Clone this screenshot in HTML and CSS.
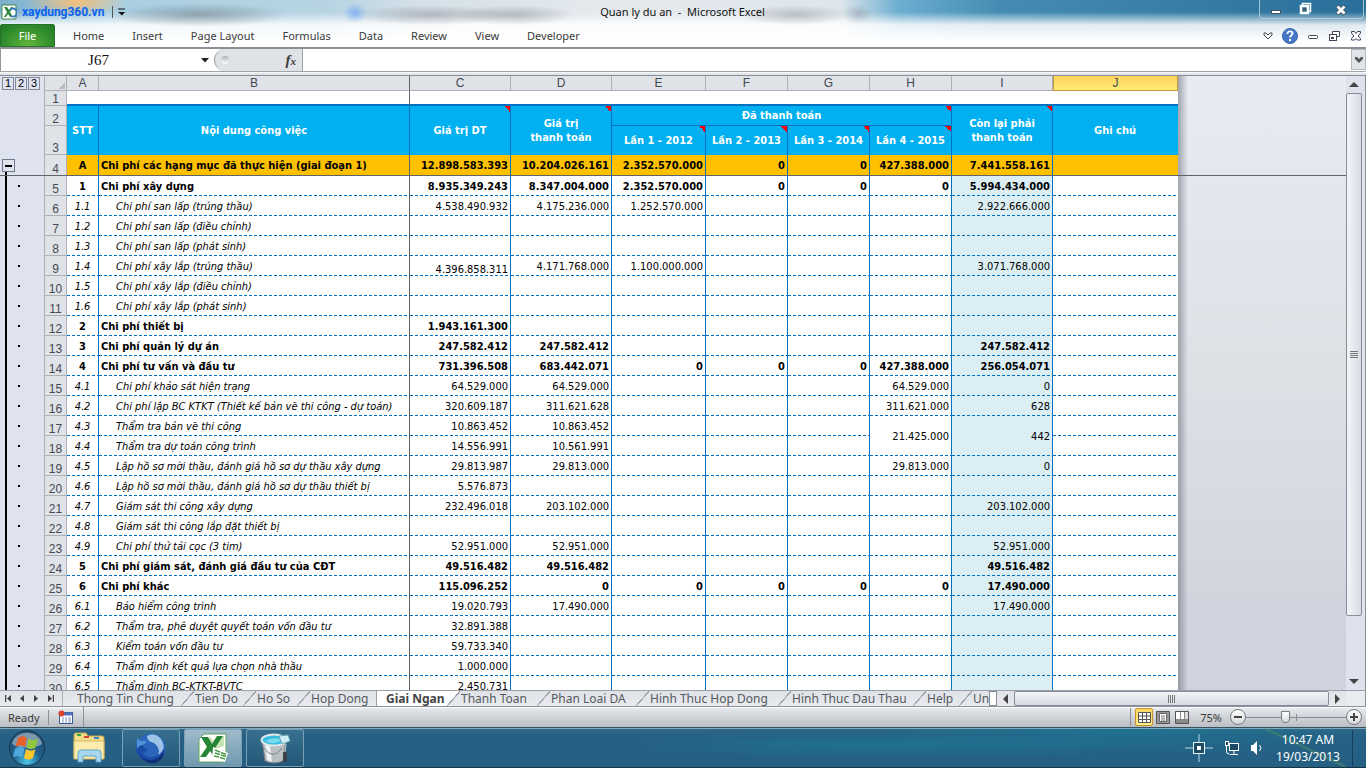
FILE: index.html
```
<!DOCTYPE html>
<html lang="vi">
<head>
<meta charset="utf-8">
<title>Quan ly du an - Microsoft Excel</title>
<link rel="stylesheet" href="styles.css">
</head>
<body>
<header class="top">
  <div class="titlebar">
    <div class="quick">
      <svg class="app-icon" width="16" height="16" viewBox="0 0 16 16"><path d="M1 1h14v14H1z" fill="#fff" stroke="#3a8a45"/><path d="M3 3h3l2 3 2-3h2L9 8l3 5H9L7 10l-2 3H3l3-5z" fill="#2f8a3a"/><path d="M9 6a4 4 0 1 1 1 6" fill="none" stroke="#3f7fc0" stroke-width="2"/></svg>
      <span class="brand">xaydung360.vn</span>
      <span class="quick-sep"></span>
      <button class="bare" aria-label="Customize quick access"><svg width="7" height="8"><path d="M0 1h7" stroke="#111"/><path d="M0 4h7l-3 3.5z" fill="#111"/></svg></button>
    </div>
    <h1 class="title">Quan ly du an &nbsp;- &nbsp;Microsoft Excel</h1>
    <div class="window-buttons">
      <button class="bare" aria-label="Minimize"><svg width="12" height="14"><rect x="1.500" y="8.500" width="9" height="3" fill="#fff" stroke="#445460"/></svg></button>
      <button class="bare" aria-label="Restore"><svg width="13" height="14"><path d="M3.500 3V1.500h8v8H10" fill="none" stroke="#fff" stroke-width="1.500"/><rect x="2" y="4" width="7" height="7" fill="none" stroke="#fff" stroke-width="2.500"/><rect x="4" y="6" width="3" height="3" fill="#456"/></svg></button>
      <button class="bare" aria-label="Close"><svg width="12" height="14"><path d="M2 4l8 8M10 4l-8 8" stroke="#445460" stroke-width="4.500"/><path d="M2.500 4.500l7 7M9.500 4.500l-7 7" stroke="#fff" stroke-width="2.800"/></svg></button>
    </div>
  </div>
  <nav class="ribbon">
    <button class="file">File</button>
    <button class="tab">Home</button>
    <button class="tab">Insert</button>
    <button class="tab">Page Layout</button>
    <button class="tab">Formulas</button>
    <button class="tab">Data</button>
    <button class="tab">Review</button>
    <button class="tab">View</button>
    <button class="tab">Developer</button>
    <div class="ribbon-tools">
      <button class="bare" aria-label="Expand ribbon"><svg width="10" height="8"><path d="M1 3V1h2l2 2 2-2h2v2L5 7z" fill="#fff" stroke="#445" /></svg></button>
      <button class="bare" aria-label="Help"><svg width="16" height="16"><circle cx="8" cy="8" r="7.500" fill="#4677c4" stroke="#3561a9"/><path d="M5.500 6c0-4 5-3 5-.5C10.500 7.500 8 7.500 8 9.500" fill="none" stroke="#fff" stroke-width="1.800"/><circle cx="8" cy="12" r="1.200" fill="#fff"/></svg></button>
      <button class="bare" aria-label="Minimize workbook"><svg width="12" height="12"><rect x="1.500" y="5.500" width="9" height="3" rx="1" fill="#fff" stroke="#445"/></svg></button>
      <button class="bare" aria-label="Restore workbook"><svg width="13" height="12"><path d="M4.500 4V1.500h7v5H9" fill="#fff" stroke="#445"/><rect x="1.500" y="4.500" width="7" height="6" fill="#fff" stroke="#445"/><rect x="3.500" y="7.500" width="2" height="1" fill="#fff" stroke="#445"/></svg></button>
      <button class="bare glow" aria-label="Close workbook"><svg width="12" height="12"><path d="M1.500 1.500h3L6 3.500l1.500-2h3v1.500L8 6l2.500 2.500V10h-3L6 8.500 4.500 10h-3V8.500L4 6 1.500 3z" fill="#fff" stroke="#445"/></svg></button>
    </div>
  </nav>
</header>

<div class="formula-bar">
  <input class="name-box" aria-label="Name box" value="J67">
  <button class="bare name-arrow" aria-label="Name list"><svg width="8" height="5"><path d="M0 0h8L4 4.500z" fill="#222"/></svg></button>
  <div class="fx-area"><span class="knob"></span><button class="bare fx" aria-label="Insert function">f<small>x</small></button></div>
  <input class="formula" aria-label="Formula">
  <button class="formula-expand" aria-label="Expand formula bar"><svg width="8" height="6"><path d="M0 0h2l2 2 2-2h2v2L4 6 0 2z" fill="#555"/></svg></button>
</div>

<main class="work">
  <div class="sheet">
    <table class="grid">
      <colgroup><col class="w-out"><col class="w-row"><col class="w-a"><col class="w-b"><col class="w-cd"><col class="w-cd"><col class="w-e"><col class="w-f"><col class="w-f"><col class="w-f"><col class="w-cd"><col class="w-j"></colgroup>
      <tr class="letters"><td class="levels"><div><button>1</button><button>2</button><button>3</button></div></td><th class="corner"></th><th>A</th><th class="frz">B</th><th>C</th><th>D</th><th>E</th><th>F</th><th>G</th><th>H</th><th>I</th><th class="active">J</th></tr>
      <tr class="r1"><td class="out"></td><th>1</th><td class="plain"></td><td class="plain frz"></td><td class="plain" colspan="8"></td></tr>
      <tr class="head r2"><td class="out"></td><th>2</th><td rowspan="2">STT</td><td rowspan="2">Nội dung công việc</td><td class="note" rowspan="2">Giá trị DT</td><td class="note" rowspan="2">Giá trị<br>thanh toán</td><td class="note sub" colspan="4">Đã thanh toán</td><td class="note" rowspan="2">Còn lại phải<br>thanh toán</td><td class="last" rowspan="2">Ghi chú</td></tr>
      <tr class="head r3"><td class="out"></td><th>3</th><td class="note">Lần 1 - 2012</td><td class="note">Lần 2 - 2013</td><td class="note">Lần 3 - 2014</td><td class="note">Lần 4 - 2015</td></tr>
      <tr class="gold bold"><td class="out"><button class="collapse" aria-label="Collapse group"></button></td><th>4</th><td>A</td><td>Chi phí các hạng mục đã thực hiện (giai đoạn 1)</td><td>12.898.583.393</td><td>10.204.026.161</td><td>2.352.570.000</td><td>0</td><td>0</td><td>427.388.000</td><td>7.441.558.161</td><td></td></tr>
      <tr class="row bold"><td class="out"></td><th>5</th><td>1</td><td>Chi phí xây dựng</td><td>8.935.349.243</td><td>8.347.004.000</td><td>2.352.570.000</td><td>0</td><td>0</td><td>0</td><td>5.994.434.000</td><td></td></tr>
      <tr class="row"><td class="out"></td><th>6</th><td>1.1</td><td>Chi phí san lấp (trúng thầu)</td><td>4.538.490.932</td><td>4.175.236.000</td><td>1.252.570.000</td><td></td><td></td><td></td><td>2.922.666.000</td><td></td></tr>
      <tr class="row"><td class="out"></td><th>7</th><td>1.2</td><td>Chi phí san lấp (điều chỉnh)</td><td></td><td></td><td></td><td></td><td></td><td></td><td></td><td></td></tr>
      <tr class="row"><td class="out"></td><th>8</th><td>1.3</td><td>Chi phí san lấp (phát sinh)</td><td></td><td></td><td></td><td></td><td></td><td></td><td></td><td></td></tr>
      <tr class="row"><td class="out"></td><th>9</th><td>1.4</td><td>Chi phí xây lắp (trúng thầu)</td><td class="low">4.396.858.311</td><td>4.171.768.000</td><td>1.100.000.000</td><td></td><td></td><td></td><td>3.071.768.000</td><td></td></tr>
      <tr class="row"><td class="out"></td><th>10</th><td>1.5</td><td>Chi phí xây lắp (điều chỉnh)</td><td></td><td></td><td></td><td></td><td></td><td></td><td></td><td></td></tr>
      <tr class="row"><td class="out"></td><th>11</th><td>1.6</td><td>Chi phí xây lắp (phát sinh)</td><td></td><td></td><td></td><td></td><td></td><td></td><td></td><td></td></tr>
      <tr class="row bold"><td class="out"></td><th>12</th><td>2</td><td>Chi phí thiết bị</td><td>1.943.161.300</td><td></td><td></td><td></td><td></td><td></td><td></td><td></td></tr>
      <tr class="row bold"><td class="out"></td><th>13</th><td>3</td><td>Chi phí quản lý dự án</td><td>247.582.412</td><td>247.582.412</td><td></td><td></td><td></td><td></td><td>247.582.412</td><td></td></tr>
      <tr class="row bold"><td class="out"></td><th>14</th><td>4</td><td>Chi phí tư vấn và đầu tư</td><td>731.396.508</td><td>683.442.071</td><td>0</td><td>0</td><td>0</td><td>427.388.000</td><td>256.054.071</td><td></td></tr>
      <tr class="row"><td class="out"></td><th>15</th><td>4.1</td><td>Chi phí khảo sát hiện trạng</td><td>64.529.000</td><td>64.529.000</td><td></td><td></td><td></td><td>64.529.000</td><td>0</td><td></td></tr>
      <tr class="row"><td class="out"></td><th>16</th><td>4.2</td><td>Chi phí lập BC KTKT (Thiết kế bản vẽ thi công - dự toán)</td><td>320.609.187</td><td>311.621.628</td><td></td><td></td><td></td><td>311.621.000</td><td>628</td><td></td></tr>
      <tr class="row"><td class="out"></td><th>17</th><td>4.3</td><td>Thẩm tra bản vẽ thi công</td><td>10.863.452</td><td>10.863.452</td><td></td><td></td><td></td><td rowspan="2">21.425.000</td><td class="due" rowspan="2">442</td><td></td></tr>
      <tr class="row merged"><td class="out"></td><th>18</th><td>4.4</td><td>Thẩm tra dự toán công trình</td><td>14.556.991</td><td>10.561.991</td><td></td><td></td><td></td><td></td></tr>
      <tr class="row"><td class="out"></td><th>19</th><td>4.5</td><td>Lập hồ sơ mời thầu, đánh giá hồ sơ dự thầu xây dựng</td><td>29.813.987</td><td>29.813.000</td><td></td><td></td><td></td><td>29.813.000</td><td>0</td><td></td></tr>
      <tr class="row"><td class="out"></td><th>20</th><td>4.6</td><td>Lập hồ sơ mời thầu, đánh giá hồ sơ dự thầu thiết bị</td><td>5.576.873</td><td></td><td></td><td></td><td></td><td></td><td></td><td></td></tr>
      <tr class="row"><td class="out"></td><th>21</th><td>4.7</td><td>Giám sát thi công xây dựng</td><td>232.496.018</td><td>203.102.000</td><td></td><td></td><td></td><td></td><td>203.102.000</td><td></td></tr>
      <tr class="row"><td class="out"></td><th>22</th><td>4.8</td><td>Giám sát thi công lắp đặt thiết bị</td><td></td><td></td><td></td><td></td><td></td><td></td><td></td><td></td></tr>
      <tr class="row"><td class="out"></td><th>23</th><td>4.9</td><td>Chi phí thử tải cọc (3 tim)</td><td>52.951.000</td><td>52.951.000</td><td></td><td></td><td></td><td></td><td>52.951.000</td><td></td></tr>
      <tr class="row bold"><td class="out"></td><th>24</th><td>5</td><td>Chi phí giám sát, đánh giá đầu tư của CĐT</td><td>49.516.482</td><td>49.516.482</td><td></td><td></td><td></td><td></td><td>49.516.482</td><td></td></tr>
      <tr class="row bold"><td class="out"></td><th>25</th><td>6</td><td>Chi phí khác</td><td>115.096.252</td><td>0</td><td>0</td><td>0</td><td>0</td><td>0</td><td>17.490.000</td><td></td></tr>
      <tr class="row"><td class="out"></td><th>26</th><td>6.1</td><td>Bảo hiểm công trình</td><td>19.020.793</td><td>17.490.000</td><td></td><td></td><td></td><td></td><td>17.490.000</td><td></td></tr>
      <tr class="row"><td class="out"></td><th>27</th><td>6.2</td><td>Thẩm tra, phê duyệt quyết toán vốn đầu tư</td><td>32.891.388</td><td></td><td></td><td></td><td></td><td></td><td></td><td></td></tr>
      <tr class="row"><td class="out"></td><th>28</th><td>6.3</td><td>Kiểm toán vốn đầu tư</td><td>59.733.340</td><td></td><td></td><td></td><td></td><td></td><td></td><td></td></tr>
      <tr class="row"><td class="out"></td><th>29</th><td>6.4</td><td>Thẩm định kết quả lựa chọn nhà thầu</td><td>1.000.000</td><td></td><td></td><td></td><td></td><td></td><td></td><td></td></tr>
      <tr class="row"><td class="out"></td><th>30</th><td>6.5</td><td>Thẩm định BC-KTKT-BVTC</td><td>2.450.731</td><td></td><td></td><td></td><td></td><td></td><td></td><td></td></tr>
    </table>
    <div class="void"></div>
    <div class="freeze-line"></div>
  </div>
  <div class="vscroll">
    <button class="bare v-btn" aria-label="Scroll up"><svg width="10" height="5"><path d="M0 5h10L5 0z" fill="#444"/></svg></button>
    <div class="v-thumb"><i class="grip"></i></div>
    <div class="v-rest"></div>
    <button class="bare v-btn" aria-label="Scroll down"><svg width="10" height="5"><path d="M0 0h10L5 5z" fill="#444"/></svg></button>
  </div>
</main>

<div class="sheet-bar">
  <div class="sheet-nav">
    <button class="bare" aria-label="First sheet"><svg width="7" height="7"><path d="M.5 0v7" stroke="#444" stroke-width="1.500"/><path d="M6 0v7L2 3.500z" fill="#444"/></svg></button>
    <button class="bare" aria-label="Previous sheet"><svg width="7" height="7"><path d="M5 0v7L1 3.500z" fill="#444"/></svg></button>
    <button class="bare" aria-label="Next sheet"><svg width="7" height="7"><path d="M1 0v7l4-3.500z" fill="#444"/></svg></button>
    <button class="bare" aria-label="Last sheet"><svg width="7" height="7"><path d="M6.500 0v7" stroke="#444" stroke-width="1.500"/><path d="M1 0v7l4-3.500z" fill="#444"/></svg></button>
  </div>
  <div class="sheet-tabs">
    <button class="stab s-118">Thong Tin Chung</button><button class="stab s-62">Tien Do</button><button class="stab s-54">Ho So</button><button class="stab s-75 before">Hop Dong</button><button class="stab s-75 current">Giai Ngan</button><button class="stab s-90">Thanh Toan</button><button class="stab s-99">Phan Loai DA</button><button class="stab s-142">Hinh Thuc Hop Dong</button><button class="stab s-135">Hinh Thuc Dau Thau</button><button class="stab s-46">Help</button><button class="stab end">Un</button>
  </div>
  <span class="splitter"></span>
  <button class="bare h-btn" aria-label="Scroll left"><svg width="5" height="10"><path d="M5 0v10L0 5z" fill="#444"/></svg></button>
  <div class="h-thumb"><i class="grip side"></i></div>
  <button class="bare h-btn" aria-label="Scroll right"><svg width="5" height="10"><path d="M0 0v10l5-5z" fill="#444"/></svg></button>
  <span class="bar-corner"></span>
</div>

<div class="status">
  <span class="ready">Ready</span>
  <button class="bare macro" aria-label="Record macro"><svg width="16" height="15"><rect x="1.500" y="2.500" width="13" height="11" fill="#fff" stroke="#3c5c95"/><path d="M2 4h12" stroke="#4a74c0" stroke-width="3"/><path d="M4 8h2m1 0h2m1 0h3M4 10h2m1 0h2m1 0h3M4 12h2m1 0h2m1 0h3" stroke="#7d94bd"/><circle cx="3.500" cy="3.500" r="3" fill="#d9412c"/></svg></button>
  <span class="status-fill"></span>
  <div class="views">
    <button class="view on" aria-label="Normal"><svg width="13" height="11"><path d="M.5.5h12v10H.5zM4.500 0v11M8.500 0v11M0 4h13M0 7.500h13" fill="#fff" stroke="#555"/></svg></button>
    <button class="view" aria-label="Page layout"><svg width="14" height="13"><path d="M.5.500h13v12H.5z" fill="#999" stroke="#555"/><path d="M3.500 2.500h7v8h-7z" fill="#fff" stroke="#666"/><path d="M5 5h4M5 7h4M5 9h4" stroke="#777"/></svg></button>
    <button class="view" aria-label="Page break preview"><svg width="14" height="13"><path d="M.5.500h13v12H.5z" fill="#888" stroke="#555"/><path d="M1 1h4v7H1zM6 1h3v7H6z" fill="#fff"/><path d="M10 1h3v7h-3z" fill="#ddd"/></svg></button>
  </div>
  <span class="percent">75%</span>
  <button class="zoom-btn" aria-label="Zoom out"><svg width="8" height="8"><path d="M0 4h8" stroke="#444" stroke-width="2"/></svg></button>
  <input class="zoom" type="range" min="0" max="100" value="38" aria-label="Zoom">
  <button class="zoom-btn" aria-label="Zoom in"><svg width="8" height="8"><path d="M0 4h8M4 0v8" stroke="#444" stroke-width="2"/></svg></button>
</div>

<footer class="taskbar">
  <button class="bare start" aria-label="Start"><svg width="38" height="38" viewBox="0 0 38 38"><defs><radialGradient id="orb" cx=".5" cy=".9" r=".8"><stop offset="0" stop-color="#4cc8ea"/><stop offset=".5" stop-color="#1f5f8d"/><stop offset="1" stop-color="#26506e"/></radialGradient></defs><circle cx="19" cy="19" r="17.500" fill="url(#orb)" stroke="#15394f"/><path d="M4 15C7 0 31 0 34 15 27 20 11 20 4 15z" fill="#bfd3df" opacity=".55"/><path d="M10 9c4-2.500 6-2 9 0l-2 9c-4-2-6-2-9.500 0z" fill="#e8602c"/><path d="M20.500 9.500c4 2 6 2 9.500 0l-2.500 9c-3.500 2-6 2-9 0z" fill="#93c83e"/><path d="M7 19.500c4-2 6-2 9.500 0l-2.500 9c-3.500-2-6-2-9 0z" fill="#4fa7e0"/><path d="M18 20c3.500 2 6 2 9.500 0l-2.500 9c-3.500 2-6 2-9 0z" fill="#fbc52c"/></svg></button>
  <button class="task flat" aria-label="Explorer"><svg width="34" height="32" viewBox="0 0 34 32"><path d="M2 3q0-2 2-2h10l2 3h14q2 0 2 2v20H2z" fill="#f3dc87" stroke="#c8a24b"/><path d="M5 2h4v2H5z" fill="#2fa644"/><path d="M12 4h5v2h-5z" fill="#d5452e"/><path d="M22 5h5v2h-5z" fill="#3b83cc"/><path d="M2 9h30v18H2z" fill="#fbecae" stroke="#d5b665"/><path d="M6 30V21q0-3 3-3h17q3 0 3 3v9h-5v-6H11v6z" fill="#a9d8ee" stroke="#5fa6c9"/></svg></button>
  <button class="task" aria-label="Firefox"><svg width="32" height="32" viewBox="0 0 32 32"><circle cx="16" cy="16" r="14.500" fill="#2a66bb"/><path d="M12 4q8-4 14 3 4 6 2 12-2 3-5 4 2-4 0-7-2-5-7-6-4-2-4-6z" fill="#9dc4e6"/><path d="M2 6q2 1 3 3 4-1 7 1l-4 3q1 4 5 4-2 4-6 4 4 5 11 4 7-1 11-9 2 9-6 13-8 4-15-1Q0 22 1 14 1 9 2 6z" fill="#1b4da6"/><path d="M2 6q2 1 3 3 4-1 7 1l-4 3q-4 0-6 4-1-6 0-11z" fill="#4d93d8"/><path d="M3 20q5 9 14 8 8-1 12-9 0 9-9 12-11 2-17-11z" fill="#0f2f7a"/></svg></button>
  <button class="task lit" aria-label="Excel"><svg width="32" height="32" viewBox="0 0 32 32"><path d="M7 2h22v24q0 4-4 4H2V7z" fill="#fff" stroke="#60a75d"/><path d="M13 4l3 5 5-5h6v10l-8 3 2 6-5-1-3-5-5 7H4l6-10z" fill="#c8e4b7"/><path d="M4 5h7l4 7 5-8h6l-8 12 6 9h-7l-4-6-4 6H3l7-10z" fill="#268638"/><path d="M16 15l15 6-3 9-13-3z" fill="#fff"/><path d="M18 18l5 2m1 .5l5 2M18 21l5 1.500m1 .5l5 1.500M17 24l5 1m1 .5l5 1.500" stroke="#4d9d4d" stroke-width="1.500"/></svg></button>
  <button class="task" aria-label="Paint bucket"><svg width="32" height="32" viewBox="0 0 32 32"><path d="M3 8l3 21q9 4 18 0l3-21z" fill="#b9bfc2" stroke="#72797d"/><path d="M6 12l2 16 5 2-2-17z" fill="#eef1f2"/><ellipse cx="15" cy="8" rx="12.500" ry="5.500" fill="#37bde0" stroke="#e1e7e9" stroke-width="2"/><path d="M6 9q8-5 18-1-9 6-18 1z" fill="#78dced"/><path d="M20 4l9-1 2 6-8 3z" fill="#cdeef6" stroke="#6fa9bb"/><path d="M5 16q9 13 18 0" fill="none" stroke="#7b8589"/><path d="M27 12l-1 9" stroke="#c9cdd0"/><path d="M24 20h4v10h-4z" fill="#394248"/></svg></button>
  <span class="task-fill"></span>
  <div class="tray">
    <svg width="30" height="30"><path d="M15 1v8M15 21v8M1 15h8M21 15h8" stroke="#b9d6e4"/><rect x="9.500" y="9.500" width="11" height="11" fill="#1e4a66" stroke="#e6f2f7"/><rect x="13" y="13" width="4" height="4" fill="#fff"/></svg>
    <svg width="16" height="16"><rect x="5.500" y="3.500" width="9" height="7" fill="#1b4a67" stroke="#fff"/><path d="M10 11v3M6 14.500h8M2.500 5v7q0 2 3 2" fill="none" stroke="#fff"/><rect x="1.500" y="1.500" width="3" height="4" fill="#1b4a67" stroke="#fff"/></svg>
    <svg width="14" height="16"><path d="M1 5h2l4-4v14l-4-4H1z" fill="#fff"/><path d="M9.500 5q3 3 0 6" fill="none" stroke="#fff"/></svg>
  </div>
  <div class="clock"><span>10:47 AM</span><span>19/03/2013</span></div>
  <button class="bare show-desktop" aria-label="Show desktop"></button>
</footer>
</body>
</html>
```
FILE: styles.css
```
* { box-sizing: border-box; }
body {
  margin: 0;
  height: 100vh;
  display: flex;
  flex-direction: column;
  overflow: hidden;
  background: #dfe3ef;
  font-family: "Noto Sans", "Open Sans", sans-serif;
  font-size: 11px;
  color: #3b3b3b;
}
button, input { font: inherit; color: inherit; margin: 0; padding: 0; border-radius: 0; }
button { border: 0; background: none; white-space: nowrap; }
.bare { display: flex; align-items: center; justify-content: center; }
svg { display: block; flex: none; }

/* title bar and ribbon */
.top {
  flex: none;
  height: 48px;
  background:
    radial-gradient(ellipse 90px 12px at 200px 15px, rgba(90,100,110,.45), transparent),
    radial-gradient(ellipse 12px 10px at 355px 13px, rgba(80,150,255,.55), transparent),
    radial-gradient(ellipse 80px 10px at 430px 15px, rgba(110,115,125,.4), transparent),
    radial-gradient(ellipse 60px 10px at 515px 15px, rgba(110,115,125,.4), transparent),
    radial-gradient(ellipse 55px 10px at 795px 15px, rgba(120,125,135,.4), transparent),
    radial-gradient(ellipse 16px 10px at 858px 14px, rgba(120,125,135,.35), transparent),
    radial-gradient(ellipse 50px 14px at 76px 2px, rgba(255,190,110,.9), transparent),
    linear-gradient(to bottom, transparent 12px, rgba(255,255,255,.85) 25px, #fff 42px),
    linear-gradient(to right, #7db0cc 0, #a9cfe2 110px, #b8d4e2 330px, #d5e0e8 420px, #e4e9ed 600px, #dfe6eb 840px, #6aaed0 900px, #458cb2 1000px, #28709a 100%);
  border-bottom: 1px solid #8b9097;
}
.titlebar { display: flex; height: 24px; align-items: flex-start; justify-content: space-between; }
.quick { flex: 1 1 0; display: flex; align-items: center; height: 24px; padding-left: 1px; }
.brand { margin-left: 5px; white-space: nowrap; font: bold 12px/20px Roboto, "Liberation Sans", sans-serif; color: #0b62f0; }
.quick-sep { width: 1px; height: 12px; margin: 0 5px 0 8px; background: #555; }
.title { margin: 0; font-size: 11px; font-weight: normal; line-height: 24px; color: #111; }
.window-buttons { flex: 1 1 0; display: flex; justify-content: flex-end; padding-right: 2px; }
.window-buttons button { height: 19px; border-bottom: 1px solid #b7cbd6; width: 28px; }
.window-buttons button:first-child { border-left: 1px solid #a9c3d0; border-radius: 0 0 0 4px; width: 32px; }
.window-buttons button:last-child { border-right: 1px solid #a9c3d0; border-radius: 0 0 4px 0; width: 45px; }
.ribbon { display: flex; height: 23px; align-items: stretch; }
.file { width: 55px; margin-right: 4px; color: #fff; border: 1px solid #27702a; border-radius: 2px 2px 0 0; background: radial-gradient(ellipse at bottom, #62b43c, #2d8a2b 70%, #227624); }
.tab { padding: 0 14px; }
.ribbon-tools { margin-left: auto; display: flex; align-items: center; gap: 9px; padding-right: 4px; }
.glow { background: radial-gradient(#b9d0f4, transparent 75%); }

/* formula bar */
.formula-bar { flex: none; display: flex; height: 28px; padding-top: 1px; border-bottom: 1px solid #8b9097; background: linear-gradient(#8b9097 1px, #fff 1px, #fff 23px, #a0a4a8 23px, #a0a4a8 24px, #fff 24px, #dde1e8 26px); }
.name-box { width: 196px; height: 22px; border: 0; border-left: 1px solid #999; background: #fff; text-align: center; font: 15px "Liberation Serif", serif; color: #111; }
.name-arrow { width: 18px; height: 22px; background: #fff; }
.fx-area { width: 89px; height: 22px; display: flex; justify-content: space-between; align-items: center; padding: 0 6px; border: 1px solid #9aa0a6; border-width: 0 1px; border-radius: 12px 0 0 12px; background: #dfe2e7; }
.knob { width: 8px; height: 8px; border-radius: 50%; background: linear-gradient(#aeb3ba, #fff); }
.fx { align-items: baseline; font: italic bold 15px "Liberation Serif", serif; }
.fx small { font-size: 11px; }
.formula { flex: 1; height: 22px; border: 0; background: #fff; }
.formula-expand { width: 15px; height: 21px; display: flex; align-items: center; justify-content: center; border: 1px solid #b5b9bf; background: #e0e3e8; }

/* worksheet */
.work { flex: 1 1 0; min-height: 0; display: flex; }
.sheet { position: relative; flex: 1; min-width: 0; display: flex; align-items: flex-start; overflow: hidden; }
.void { flex: 1; align-self: stretch; background: linear-gradient(to right, rgba(90,95,105,.5), transparent 10px), linear-gradient(#e8ebf1, #dde1e6 50%, #cfd3dd 90%); }
.freeze-line { position: absolute; left: 0; right: 0; top: 99px; height: 1px; background: #606468; }
.grid { flex: none; width: 1178px; table-layout: fixed; border-collapse: separate; border-spacing: 0; background: #fff; font: 11px/13px "DejaVu Sans Condensed", "DejaVu Sans", sans-serif; color: #000; }
.w-out { width: 44px; } .w-row { width: 23px; } .w-a { width: 32px; } .w-b { width: 311px; }
.w-cd { width: 101px; } .w-e { width: 94px; } .w-f { width: 82px; } .w-j { width: 125px; }
.grid td, .grid th { padding: 0 2px; white-space: nowrap; overflow: hidden; }
.grid th { font: 12px/12px "Liberation Sans", sans-serif; color: #444a55; background: #dfe2e6; border: solid #adb1b6; border-width: 0 1px 1px 0; text-align: center; }
.grid th:nth-child(2) { vertical-align: bottom; padding: 0; border-left: 1px solid #adb1b6; }
.letters { height: 15px; }
.grid .corner { background: linear-gradient(135deg, #dfe2e6 60%, #b9bdc2 60%) 12px 5px / 8px 8px no-repeat #dfe2e6; }
.grid .active { background: linear-gradient(#ffd25c, #ffec76); border: 1px solid #c39537; border-top: 0; }
.grid .levels, .grid .out { padding: 0; background-color: #dfe3ef; }
.levels div { display: flex; gap: 1px; padding-left: 2px; }
.levels button { width: 12px; height: 13px; border: 1px solid #85899a; font: 11px/11px "Liberation Sans", sans-serif; color: #000; }
.r1 { height: 15px; }
.plain { border-bottom: 2px solid #0070c0; }
.r2 { height: 20px; } .r3 { height: 29px; } .gold { height: 21px; } .row { height: 20px; }
.grid .frz { border-right: 1px solid #606468; }
.head td:not(.out) { background-color: #00b0f0; color: #fff; font-weight: bold; text-align: center; border-right: 1px solid #0070c0; line-height: 14px; }
.head td.last { border-right-color: #00b0f0; }
.head td.sub { border-bottom: 1px solid #0070c0; }
.head td.note { background-image: linear-gradient(to bottom left, #f00 50%, transparent 50%); background-size: 6px 6px; background-position: top right; background-repeat: no-repeat; }
.bold { font-weight: bold; }
.gold td, .row td { text-align: right; border-right: 1px solid #0070c0; }
.gold td { background: #ffc000; border-bottom: 1px solid #606468; }
.row td { background: repeating-linear-gradient(to right, #0070c0 0, #0070c0 3px, transparent 3px, transparent 5px) left bottom / 100% 1px no-repeat; }
.gold td:nth-child(3), .row td:nth-child(3) { text-align: center; }
.gold td:nth-child(4), .row td:nth-child(4) { text-align: left; border-right-color: #606468; }
.row:not(.bold) td:nth-child(3), .row:not(.bold) td:nth-child(4) { font-style: italic; }
.row:not(.bold) td:nth-child(4) { padding-left: 17px; }
.row td:nth-child(11), .row td.due { background-color: #daeef3; }
.gold td:nth-child(12), .row td:nth-child(12), .merged td:last-child { border-right-color: transparent; }
.row td.low { vertical-align: bottom; }
.grid .out { border: 0; text-align: left; }
.row .out { background: linear-gradient(#000, #000) 18px 9px / 2px 2px no-repeat, linear-gradient(#000, #000) 5px 0 / 2px 100% no-repeat #dfe3ef; }
.gold .out { background: linear-gradient(#000, #000) 5px 14px / 2px 7px no-repeat #dfe3ef; }
.collapse { display: block; width: 13px; height: 13px; margin-left: 2px; border: 1px solid #70788c; background: linear-gradient(#000, #000) center / 7px 2px no-repeat #dfe3ef; }

/* scroll bars */
.vscroll { flex: none; width: 20px; display: flex; flex-direction: column; padding-right: 3px; border-right: 1px solid #8b9097; background: #dfe2ec; }
.v-btn { height: 17px; }
.v-thumb { flex: 523; display: flex; align-items: center; justify-content: center; border: 1px solid #858b98; border-radius: 2px; background: linear-gradient(to right, #f4f5f8, #d8dbe3); }
.v-rest { flex: 57; }
.grip { width: 8px; height: 8px; background: repeating-linear-gradient(#777 0, #777 1px, transparent 1px, transparent 2px); }
.grip.side { background: repeating-linear-gradient(to right, #777 0, #777 1px, transparent 1px, transparent 2px); }
.sheet-bar { flex: none; display: flex; align-items: stretch; height: 17px; border-top: 1px solid #9aa0a8; border-bottom: 1px solid #8f949c; background: linear-gradient(#dfe2e7, #e8eaee); font-size: 12px; }
.sheet-nav { width: 63px; display: flex; gap: 7px; padding-left: 5px; border-right: 1px solid #a8adb4; }
.sheet-tabs { flex: 1; min-width: 0; display: flex; overflow: hidden; padding-left: 14px; }
.stab { flex: none; text-align: left; line-height: 15px; color: #555960; background: linear-gradient(to bottom right, transparent 47%, #9aa0a8 48%, #9aa0a8 53%, transparent 54%) right 1px top / 13px 15px no-repeat; }
.stab.current { font-weight: bold; color: #444; background: linear-gradient(to bottom right, #fff 47%, #9aa0a8 48%, #9aa0a8 53%, transparent 54%) right 1px top / 13px 15px no-repeat, linear-gradient(#fff, #fff) left top / 61px 100% no-repeat; }
.stab.before { background: linear-gradient(to right, #9aa0a8 1px, #fff 1px) right top / 10px 100% no-repeat; }
.stab.end { background: none; }
.s-118 { width: 118px; } .s-62 { width: 62px; } .s-54 { width: 54px; } .s-75 { width: 75px; } .s-90 { width: 90px; }
.s-99 { width: 99px; } .s-142 { width: 142px; } .s-135 { width: 135px; } .s-46 { width: 46px; }
.splitter { width: 8px; border: 1px solid #858b98; background: #fff; }
.h-btn { width: 17px; }
.h-thumb { width: 315px; display: flex; align-items: center; justify-content: center; border: 1px solid #858b98; border-radius: 2px; background: linear-gradient(#f4f5f8, #d4d8e0); }
.bar-corner { width: 20px; border-right: 1px solid #8b9097; background: #e8ebf0; }

/* status bar */
.status { flex: none; display: flex; align-items: center; height: 21px; padding-right: 4px; background: linear-gradient(#fff 0, #e2e5e9 2px, #babec3); border-bottom: 1px solid #39505f; }
.ready { width: 49px; padding-left: 8px; border-right: 1px solid #8c9198; }
.macro { width: 35px; height: 20px; border-right: 1px solid #8c9198; }
.status-fill { flex: 1; }
.views { display: flex; border-left: 1px solid #8c9198; padding-left: 4px; gap: 1px; }
.view { width: 18px; height: 18px; display: flex; align-items: center; justify-content: center; }
.view.on { border: 1px solid #c8932b; border-radius: 2px; background: linear-gradient(#ffd762, #ffec8a); }
.percent { margin: 0 8px 0 9px; }
.zoom-btn { width: 16px; height: 16px; display: flex; align-items: center; justify-content: center; border: 1px solid #777b80; border-radius: 50%; background: linear-gradient(#fff, #d5d8dc); }
.zoom { -webkit-appearance: none; appearance: none; width: 100px; height: 14px; background: linear-gradient(#888e98, #888e98) center / 100% 1px no-repeat, linear-gradient(#888e98, #888e98) center / 1px 7px no-repeat; }
.zoom::-webkit-slider-thumb { -webkit-appearance: none; width: 9px; height: 12px; border: 1px solid #777b80; border-radius: 1px 1px 5px 5px; background: linear-gradient(#fff, #d5d8dc); }

/* taskbar */
.taskbar { flex: none; display: flex; align-items: center; height: 40px; border-top: 1px solid #7fa9bf; border-bottom: 1px solid #12354a; font-size: 12px;
  background: linear-gradient(to top right, transparent 47%, rgba(90,150,90,.5) 50%, transparent 53%) right 20px top / 80px 100% no-repeat, radial-gradient(ellipse 260px 30px at 1120px 0, rgba(25,125,150,.6), transparent), radial-gradient(ellipse 260px 14px at 880px 16px, rgba(25,125,150,.6), transparent), linear-gradient(#2e6787, #266085 6px, #255f82); }
.start { width: 54px; height: 38px; }
.task { width: 58px; height: 38px; margin-right: 4px; display: flex; align-items: center; justify-content: center; border: 1px solid #7ba0b5; border-radius: 2px; background: linear-gradient(#37708f, #235778); }
.task.flat { width: 64px; padding-left: 6px; border-color: transparent; background: none; }
.task.lit { background: linear-gradient(#a0bccb, #6f98af); }
.task-fill { flex: 1; }
.tray { display: flex; align-items: center; gap: 10px; }
.clock { width: 88px; display: flex; flex-direction: column; text-align: center; line-height: 17px; color: #fff; }
.show-desktop { width: 14px; height: 36px; border-left: 1px solid #17415a; }
```
